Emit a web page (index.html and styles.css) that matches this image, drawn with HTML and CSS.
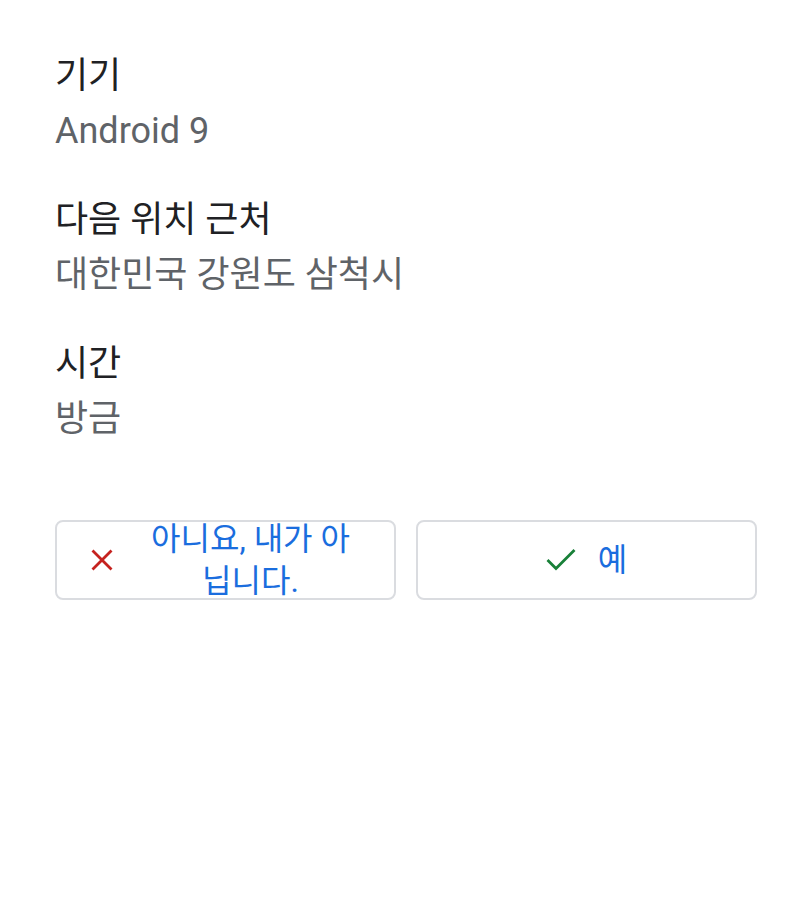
FILE: index.html
```html
<!DOCTYPE html>
<html lang="ko">
<head>
    <meta charset="UTF-8">
    <title>기기 확인</title>
    <link rel="stylesheet" href="styles.css">
</head>
<body>
    <div id="details">
        <div class="info-item">
            <div class="info-label">기기</div>
            <div class="info-value">Android 9</div>
        </div>
        <div class="info-item">
            <div class="info-label">다음 위치 근처</div>
            <div class="info-value">대한민국 강원도 삼척시</div>
        </div>
        <div class="info-item">
            <div class="info-label">시간</div>
            <div class="info-value">방금</div>
        </div>
    </div>

    <div id="actions">
        <button class="action-btn" id="btn-no">
            <svg class="btn-icon" viewBox="0 0 24 24" width="24" height="24">
                <path d="M2.5 2.5 L21.5 21.5 M21.5 2.5 L2.5 21.5" stroke="#c5221f" stroke-width="2.8" fill="none"/>
            </svg>
            <span class="btn-text">아니요, 내가 아닙니다.</span>
        </button>
        <button class="action-btn" id="btn-yes">
            <svg class="btn-icon" viewBox="0 0 30 24" width="30" height="24">
                <path d="M1.5 12 L10 20.5 L28.5 2" stroke="#188038" stroke-width="2.8" fill="none"/>
            </svg>
            <span class="btn-text">예</span>
        </button>
    </div>
</body>
</html>
```

FILE: styles.css
```css
body, html {
    margin: 0;
    padding: 0;
    background-color: #fff;
    font-family: Roboto, "Noto Sans CJK KR", sans-serif;
}
body {
    padding: 49px 43px 0 55px;
}
#details {
    display: flex;
    flex-direction: column;
    gap: 34px;
}
.info-label {
    font-size: 36px;
    line-height: 55px;
    color: #202124;
}
.info-value {
    font-size: 36px;
    line-height: 55px;
    color: #5f6368;
}
#actions {
    display: flex;
    gap: 20px;
    margin-top: 73px;
}
.action-btn {
    flex: 1;
    height: 80px;
    display: flex;
    align-items: center;
    justify-content: center;
    gap: 26px;
    padding: 0 33px;
    background: #fff;
    border: 2px solid #dadce0;
    border-radius: 8px;
    font-family: Roboto, "Noto Sans CJK KR", sans-serif;
    font-size: 32px;
    line-height: 42px;
    color: #1a6dde;
    box-sizing: border-box;
}
#btn-yes {
    gap: 22px;
}
.btn-icon {
    flex-shrink: 0;
}
#btn-no .btn-text {
    flex: 1;
    text-align: center;
}
```
